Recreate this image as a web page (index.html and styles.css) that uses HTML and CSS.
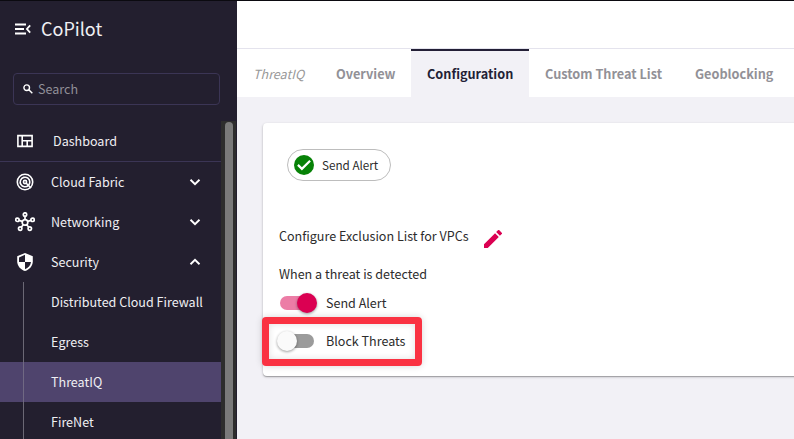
FILE: index.html
```html
<!DOCTYPE html>
<html lang="en">
<head>
<meta charset="utf-8">
<title>CoPilot</title>
<link rel="stylesheet" href="styles.css">
</head>
<body>
<div class="app">
  <aside class="sidebar">
    <header class="brand">
      <svg class="brand-icon" viewBox="0 0 16 12"><path d="M0 1.500h11M0 6h9M0 10.500h11" stroke-width="1.800"/><path d="M15.200 2.300 11.900 6l3.300 3.700" stroke-width="1.800"/></svg>
      <span>CoPilot</span>
    </header>
    <div class="search">
      <svg class="search-icon" viewBox="0 0 10 10"><circle cx="3.700" cy="3.700" r="2.800"/><path d="m5.800 5.800 3.500 3.500"/></svg>
      <span>Search</span>
    </div>
    <div class="menu">
      <nav class="nav">
        <a class="item dashboard">
          <svg class="icon" viewBox="0 0 20 20"><path d="M2.900 4.600h14.200v10.800H2.900zM7.200 4v12M7.200 9.800h10M12.200 9.800v6" fill="none" stroke="#fff" stroke-width="1.600"/></svg>
          <span>Dashboard</span>
        </a>
        <a class="item">
          <svg class="icon" viewBox="0 0 20 20"><g fill="none" stroke="#fff" stroke-width="1.600"><circle cx="10" cy="10" r="7.700"/><path d="M13.400 13.400A4.800 4.800 0 1 1 14.800 10c0 1.300-.600 2.500-1.400 3.400z"/><circle cx="10" cy="10" r="1.600"/><path d="m11 11 5 5"/></g></svg>
          <span>Cloud Fabric</span>
          <svg class="chevron" viewBox="0 0 12 8"><path d="m1.500 1.800 4.500 4.400 4.500-4.400"/></svg>
        </a>
        <a class="item">
          <svg class="icon" viewBox="0 0 20 20"><g fill="none" stroke="#fff" stroke-width="1.700"><circle cx="10" cy="10.400" r="2.800"/><circle cx="10" cy="2.500" r="1.700"/><circle cx="2.400" cy="7.800" r="1.700"/><circle cx="17.600" cy="7.800" r="1.700"/><circle cx="5.200" cy="16.600" r="1.700"/><circle cx="14.800" cy="16.600" r="1.700"/><path d="M10 4.200v3.400M4 8.400l3.300 1M16 8.400l-3.300 1M6.200 15.200l2.100-2.500M13.800 15.200l-2.100-2.500"/></g></svg>
          <span>Networking</span>
          <svg class="chevron" viewBox="0 0 12 8"><path d="m1.500 1.800 4.500 4.400 4.500-4.400"/></svg>
        </a>
        <a class="item">
          <svg class="icon" viewBox="0 0 20 20"><path d="M10 .900 2.200 4.200v5.100c0 4.500 3.300 8.600 7.800 9.700 4.500-1.100 7.800-5.200 7.800-9.700V4.200z" fill="#fff"/><path d="M10 2.800V10h6c-.500 3.400-2.800 6.100-6 7.200V10H4V5.400z" fill="#231f2f"/></svg>
          <span>Security</span>
          <svg class="chevron" viewBox="0 0 12 8"><path d="m1.500 6.200 4.500-4.400 4.500 4.400"/></svg>
        </a>
        <div class="submenu">
          <a class="subitem">Distributed Cloud Firewall</a>
          <a class="subitem">Egress</a>
          <a class="subitem selected">ThreatIQ</a>
          <a class="subitem">FireNet</a>
        </div>
      </nav>
      <div class="scrollbar"><div class="thumb"></div></div>
    </div>
  </aside>
  <main class="main">
    <div class="topbar"></div>
    <div class="tabs">
      <div class="page-name"><span>ThreatIQ</span></div>
      <a class="tab overview">Overview</a>
      <a class="tab active">Configuration</a>
      <a class="tab custom">Custom Threat List</a>
      <a class="tab geo">Geoblocking</a>
    </div>
    <section class="card">
      <div class="chip">
        <svg class="check" viewBox="0 0 20 20"><circle cx="10" cy="10" r="10" fill="#078207"/><path d="m3.900 9.900 4 4 8.200-8.200" fill="none" stroke="#fff" stroke-width="2.200"/></svg>
        <span>Send Alert</span>
      </div>
      <div class="exclusion">
        <span>Configure Exclusion List for VPCs</span>
        <svg class="pencil" viewBox="0 0 18 18"><path d="M0 14.250V18h3.750L14.810 6.940l-3.750-3.750zM17.710 4.040a1 1 0 0 0 0-1.410L15.370.290a1 1 0 0 0-1.410 0l-1.830 1.830 3.750 3.750z"/></svg>
      </div>
      <div class="caption">When a threat is detected</div>
      <div class="toggle on"><i class="switch"></i><span>Send Alert</span></div>
      <div class="highlight">
        <div class="toggle"><i class="switch"></i><span>Block Threats</span></div>
      </div>
    </section>
  </main>
</div>
</body>
</html>
```
FILE: styles.css
```css
* { box-sizing: border-box; }
body { margin: 0; font: 12.55px/20px "Noto Sans CJK SC", "Noto Sans", sans-serif; }
span { white-space: nowrap; }
svg { flex: none; display: block; }
.app { width: 794px; height: 439px; display: flex; overflow: hidden; border-top: 1px solid #0b0a10; background: #f2f1f6; }
.sidebar { width: 237px; flex: none; display: flex; flex-direction: column; background: #231f2f; color: #f0eff3; padding-right: 1px; }
.brand { display: flex; align-items: center; height: 56px; padding-left: 15px; gap: 10px; font-size: 18px; }
.brand span { margin-top: -2px; }
.brand-icon { width: 16px; height: 12px; fill: none; stroke: #fff; }
.search { display: flex; align-items: center; gap: 5px; width: 207px; height: 32px; margin: 16px 0 0 13px; padding-left: 9px; border: 1px solid #3b3555; border-radius: 4px; color: #918f98; }
.search-icon { width: 10px; height: 10px; fill: none; stroke: #fff; stroke-width: 1.400; }
.menu { display: flex; flex: 1; margin-top: 16px; min-height: 0; overflow: hidden; }
.nav { width: 221px; flex: none; }
.item { display: flex; align-items: center; height: 40px; padding: 0 19px 0 15px; gap: 16px; }
.item.dashboard { height: 41px; gap: 18px; border-bottom: 1px solid #3b3555; }
.icon { width: 20px; height: 20px; }
.chevron { width: 12px; height: 8px; margin: 0 1px 0 auto; fill: none; stroke: #fff; stroke-width: 1.900; }
.submenu { background: linear-gradient(#6b6875, #6b6875) 23px 0 / 1px 100% no-repeat; }
.subitem { display: flex; align-items: center; height: 40px; padding-left: 51px; }
.selected { background: linear-gradient(#706983, #706983) 23px 0 / 1px 100% no-repeat, #4f446d; }
.scrollbar { width: 15px; padding: 1px 3px 0 4px; background: #2d2d2d; }
.thumb { width: 8px; height: 400px; border-radius: 4px; background: #7a7a7a; }
.main { flex: 1; min-width: 0; }
.topbar { height: 48px; background: #fff; border-bottom: 1px solid #e4e3ed; }
.tabs { display: flex; height: 48px; background: #fff; }
.page-name, .tab { display: flex; align-items: center; flex: none; padding: 1px 0 0 16px; }
.page-name { width: 83px; color: #999; font-style: italic; }
.tab { font-size: 12.700px; font-weight: 700; color: #929197; white-space: nowrap; }
.overview { width: 91px; }
.active { width: 118px; padding-top: 0; border-top: 2px solid #231f36; background: #f2f1f6; color: #231f36; }
.custom { width: 150px; }
.geo { width: 115px; }
.card { height: 253px; width: 560px; margin: 26px 0 0 26px; padding-top: 26px; border-radius: 4px; background: #fff; color: #2c2c2c; box-shadow: 0 1px 3px rgba(0,0,0,.2), 0 1px 1px rgba(0,0,0,.24); }
.chip { display: flex; align-items: center; width: 104px; height: 32px; margin-left: 24px; padding-left: 6px; gap: 8px; border: 1px solid #bdbdbd; border-radius: 16px; font-size: 11.700px; }
.check { width: 20px; height: 20px; }
.exclusion { display: flex; align-items: center; height: 20px; margin: 45px 0 0 16px; }
.pencil { width: 18px; height: 18px; margin: 6px 0 0 15px; fill: #db0052; }
.caption { margin: 18px 0 0 16px; }
.toggle { display: flex; align-items: center; height: 20px; margin: 9px 0 0 17px; gap: 12px; }
.switch { position: relative; width: 34px; height: 14px; border-radius: 7px; background: #9b9b9b; }
.switch::after { content: ""; position: absolute; left: -3px; top: -3px; width: 20px; height: 20px; border-radius: 50%; background: #fafafa; box-shadow: 0 1px 3px rgba(0,0,0,.4); }
.on .switch { background: #ec7da6; }
.on .switch::after { left: 17px; background: #db0052; }
.highlight { width: 160px; height: 49px; margin: 4px 0 0 -1px; border: 7px solid #fa3242; border-radius: 4px; box-shadow: 0 0 7px rgba(0,0,0,.16), inset 0 0 7px rgba(0,0,0,.12); }
.highlight .toggle { margin: 7px 0 0 11px; }
```
